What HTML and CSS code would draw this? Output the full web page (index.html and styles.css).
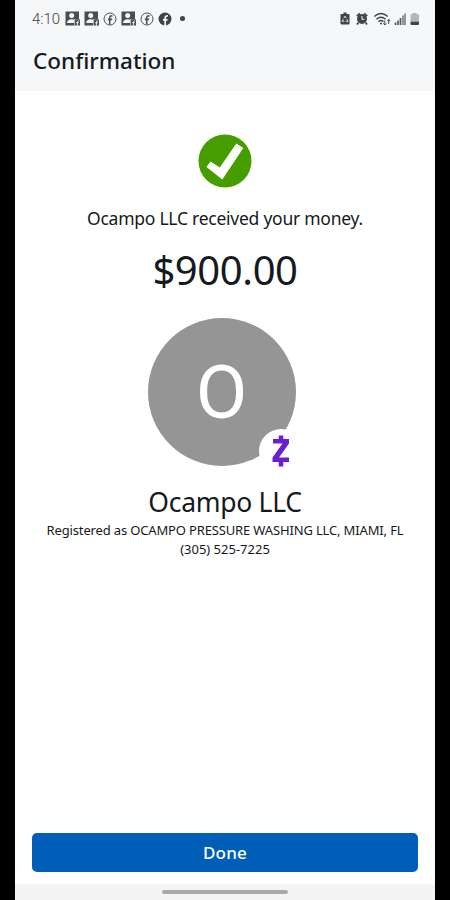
FILE: index.html
```
<!DOCTYPE html>
<html lang="en">
<head>
  <meta charset="UTF-8">
  <meta name="viewport" content="width=device-width, initial-scale=1">
  <title>Confirmation</title>
  <link rel="stylesheet" href="styles.css">
</head>
<body>

  <svg class="sprite" aria-hidden="true">
    <symbol id="contact" viewBox="0 0 15 15">
      <path d="M.5.500h13.500v8h-2.500v-.5H9.300V14.500H.5z" fill="#4b4e50"/>
      <circle cx="6.700" cy="4.600" r="2.500" fill="#f5f7f9"/>
      <path d="M2 12c0-2.500 2-3.800 4.700-3.800 1 0 1.800.2 2.600.6V12z" fill="#f5f7f9"/>
      <path d="M9.800 8.300h5.200v6.200H9.800z" fill="#4b4e50"/>
      <path d="M12.400 14.500v-3.300c0-1 .5-1.500 1.800-1.500M11.200 11.700h2.700" fill="none" stroke="#f5f7f9" stroke-width=".9"/>
    </symbol>
    <symbol id="fb" viewBox="0 0 14 14">
      <circle cx="7" cy="7" r="6" fill="none" stroke="#505355" stroke-width="1"/>
      <path d="M6.700 12.500V5.800c0-1.500.8-2.100 2.800-1.900M4.800 7.400h4.300" fill="none" stroke="#505355" stroke-width="1.600"/>
    </symbol>
    <symbol id="fb-solid" viewBox="0 0 14 14">
      <circle cx="7" cy="7" r="6.500" fill="#404345"/>
      <path d="M7.200 14V6c0-1.600.8-2.200 2.700-2M5 7.800h4.500" fill="none" stroke="#f5f7f9" stroke-width="1.700"/>
    </symbol>
  </svg>

  <div class="phone">
    <header class="header">
      <div class="status">
        <span class="time">4:10</span>
        <div class="notifications">
          <svg class="contact"><use href="#contact"/></svg>
          <svg class="contact"><use href="#contact"/></svg>
          <svg class="fb"><use href="#fb"/></svg>
          <svg class="contact"><use href="#contact"/></svg>
          <svg class="fb"><use href="#fb"/></svg>
          <svg class="fb"><use href="#fb-solid"/></svg>
          <span class="dot"></span>
        </div>
        <svg class="system" viewBox="0 0 80 16">
          <!-- battery saver -->
          <path d="M3.500 1.500h3V3H8.500q1 0 1 1v8.500q0 1-1 1h-7q-1 0-1-1V4q0-1 1-1h2z" fill="#424547"/>
          <path d="M3.800 7.200 5 5.200l1.300 2M7 8.300l1 2H5.800M4.300 10.300H2.200l1-2" fill="none" stroke="#f5f7f9" stroke-width=".9"/>
          <!-- alarm -->
          <circle cx="22" cy="8" r="5" fill="#424547"/>
          <path d="m16.800 5.200 3-2.800M27.200 5.200l-3-2.800M18.300 11.700l-1.300 1.800M25.700 11.700l1.300 1.800" stroke="#424547" stroke-width="1.800"/>
          <path d="M22 5v3.300h2.300" fill="none" stroke="#f5f7f9" stroke-width="1"/>
          <!-- wifi -->
          <path d="M34.300 5.500q6.700-5.800 13.400 0M36.400 8.200q4.600-4 9.200 0M38.500 10.700q2.500-2.200 5 0" fill="none" stroke="#424547" stroke-width="1.400"/>
          <circle cx="41" cy="12.500" r="1" fill="#424547"/>
          <path d="M44.800 9.500v4.500m-1.400-1.600 1.400 1.600 1.400-1.600M48.700 13V8.500m-1.400 1.600 1.400-1.600 1.400 1.600" fill="none" stroke="#424547" stroke-width="1"/>
          <!-- signal -->
          <path d="M55.500 14v-2.500M58 14V9.500M60.500 14V7" stroke="#55585a" stroke-width="1.700"/>
          <path d="M63 14V4.500M65 14V2.500" stroke="#737678" stroke-width="1.500"/>
          <!-- battery -->
          <path d="M72.500 2h4v1.300H78q1 0 1 1V11h-8.500V4.300q0-1 1-1h1z" fill="#b3b5b6"/>
          <path d="M70.500 10.700H79v2.300q0 1-1 1h-6.500q-1 0-1-1z" fill="#424547"/>
        </svg>
      </div>
      <h1>Confirmation</h1>
    </header>

    <main class="content">
      <svg class="check" viewBox="0 0 54 54">
        <circle cx="27" cy="27" r="26.500" fill="#459d00"/>
        <path d="m8.500 33 4-5.500 9.300 6L38.300 9.500l7 4.500L24.300 45.500z" fill="#fff"/>
      </svg>
      <p class="message">Ocampo LLC received your money.</p>
      <p class="amount">$900.00</p>

      <div class="avatar">
        <span class="initial">O</span>
        <div class="badge">
          <svg class="zelle" viewBox="0 0 18 32">
            <path d="M9 .5v6M9 25.500v6" stroke="#6a1fd0" stroke-width="4.500"/>
            <path d="M1 4h16v4.500L7 22.500h10V27H.5v-4.500L10.500 8.500H1z" fill="#6a1fd0"/>
          </svg>
        </div>
      </div>

      <h2>Ocampo LLC</h2>
      <p class="registered">Registered as OCAMPO PRESSURE WASHING LLC, MIAMI, FL</p>
      <p class="number">(305) 525-7225</p>
    </main>

    <button class="done" type="button">Done</button>
    <div class="nav-bar"><span class="handle"></span></div>
  </div>

</body>
</html>
```
FILE: styles.css
```
* {
  box-sizing: border-box;
}

body {
  margin: 0;
  background: #000;
  font-family: "Noto Sans", "Open Sans", sans-serif;
  color: #141a20;
}

h1, h2, p {
  margin: 0;
  font-weight: 400;
  white-space: nowrap;
}

.sprite {
  display: none;
}

.phone {
  display: flex;
  flex-direction: column;
  width: 420px;
  height: 900px;
  margin: 0 auto;
  background: #fff;
}

.header {
  height: 91px;
  background: #f5f7f9;
}

.status {
  display: flex;
  align-items: center;
  height: 37px;
  padding: 0 15px 0 17px;
}

.time {
  width: 33px;
  font-family: Roboto, sans-serif;
  font-size: 15px;
  font-weight: 300;
  color: #404345;
}

.notifications {
  display: flex;
  align-items: center;
  gap: 4px;
  flex: 1;
}

.contact {
  width: 15px;
  height: 15px;
}

.fb {
  width: 14px;
  height: 14px;
}

.dot {
  width: 5px;
  height: 5px;
  margin-left: 4px;
  border-radius: 50%;
  background: #404345;
}

.system {
  width: 80px;
  height: 16px;
}

h1 {
  padding-left: 18px;
  font-size: 22.5px;
  font-weight: 500;
  line-height: 48px;
}

.content {
  display: flex;
  flex-direction: column;
  align-items: center;
  flex: 1;
  padding-top: 43px;
}

.check {
  width: 54px;
  height: 54px;
}

.message {
  margin-top: 18px;
  font-size: 17.5px;
  line-height: 24px;
  letter-spacing: -0.25px;
}

.amount {
  margin-top: 16px;
  font-size: 40px;
  line-height: 48px;
  letter-spacing: -0.4px;
}

.avatar {
  position: relative;
  display: flex;
  align-items: center;
  justify-content: center;
  width: 148px;
  height: 148px;
  margin: 24px 7px 0 0;
  border-radius: 50%;
  background: #959595;
}

.initial {
  font-family: Roboto, sans-serif;
  font-size: 75px;
  line-height: 88px;
  color: #fff;
}

.badge {
  position: absolute;
  right: -7px;
  bottom: -7px;
  display: flex;
  align-items: center;
  justify-content: center;
  width: 44px;
  height: 44px;
  border-radius: 50%;
  background: #fff;
}

.zelle {
  width: 18px;
  height: 32px;
}

h2 {
  margin-top: 18px;
  font-size: 26.5px;
  line-height: 37px;
  letter-spacing: -0.3px;
}

.registered,
.number {
  font-size: 13px;
  line-height: 19px;
}

.registered {
  letter-spacing: -0.15px;
}

.done {
  height: 39px;
  margin: 0 17px 12px;
  padding: 0;
  border: 0;
  border-radius: 5px;
  background: #005eb8;
  font-family: inherit;
  font-size: 17px;
  font-weight: 500;
  letter-spacing: 0.2px;
  color: #fff;
}

.nav-bar {
  display: flex;
  justify-content: center;
  height: 16px;
  padding-top: 6px;
  background: #f4f4f4;
}

.handle {
  width: 126px;
  height: 4px;
  border-radius: 2px;
  background: #a9a9a9;
}
```
